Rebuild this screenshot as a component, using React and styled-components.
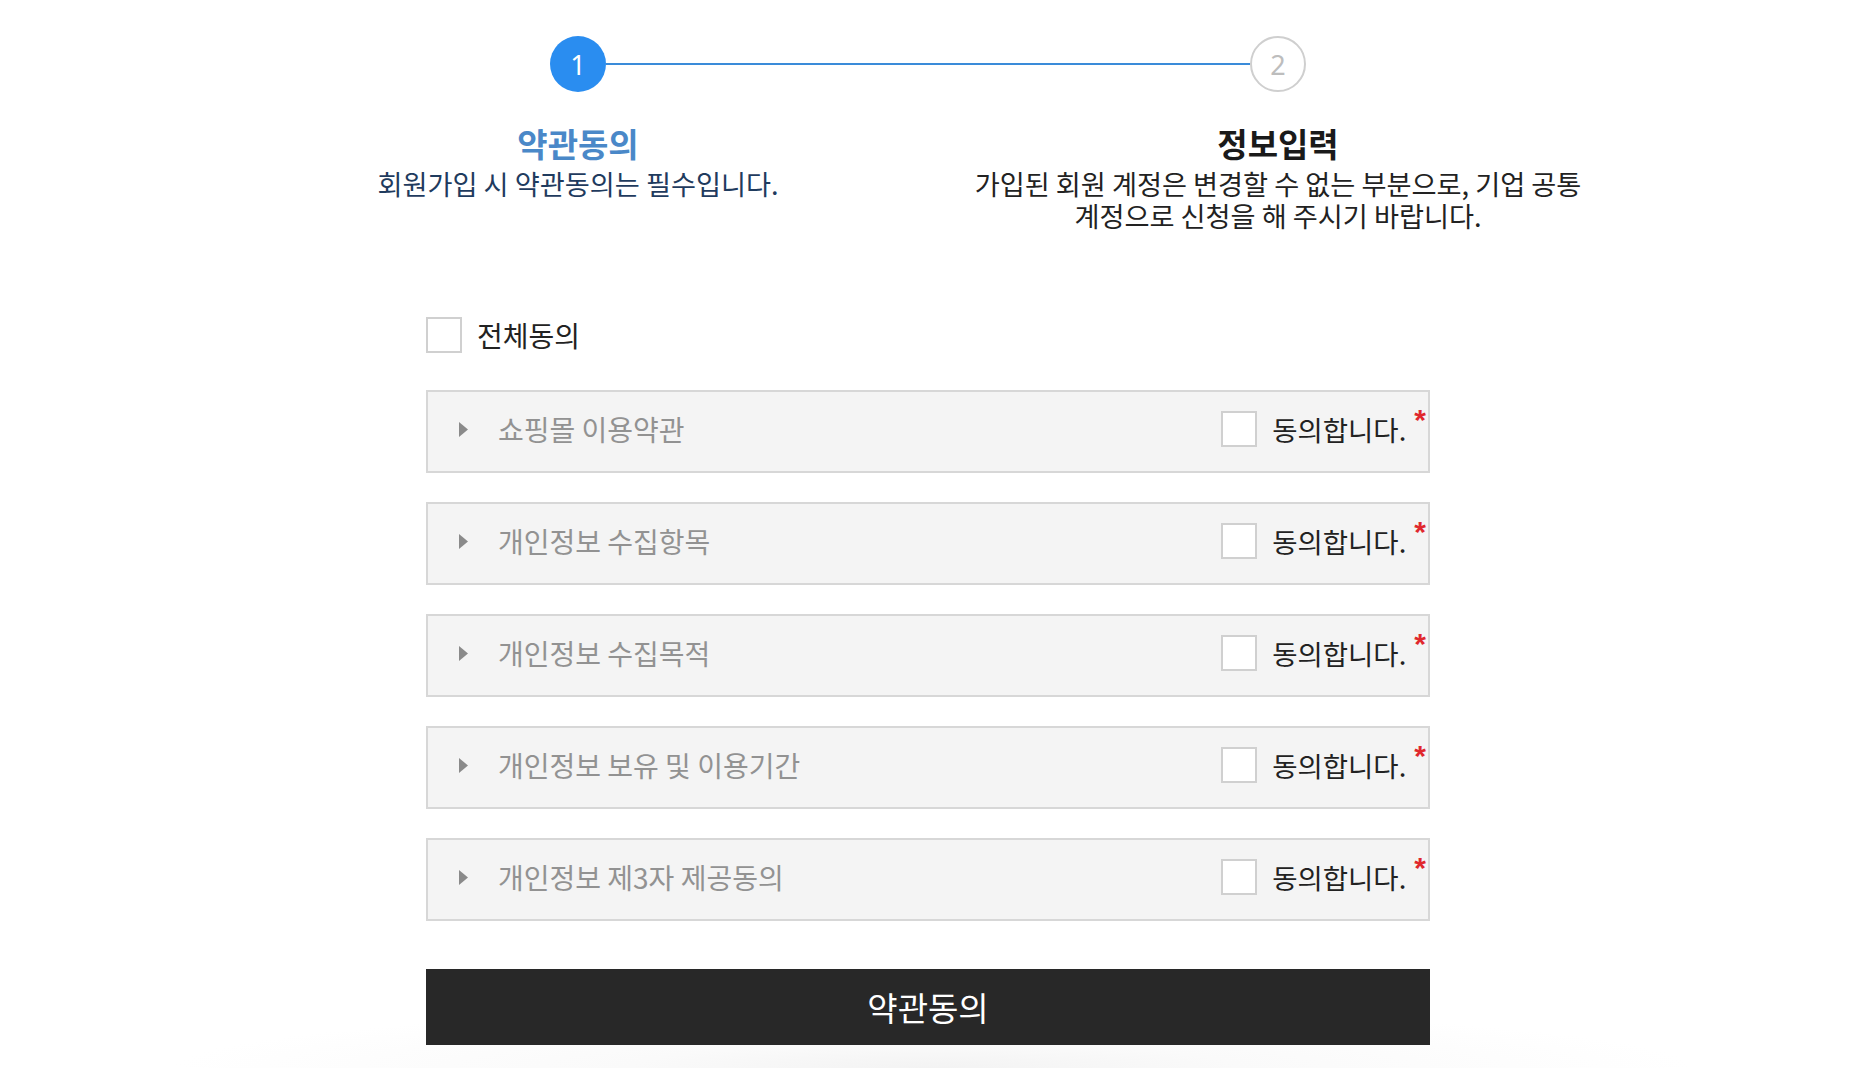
import React from "react";
import styled, { createGlobalStyle } from "styled-components";

const GlobalStyle = createGlobalStyle`
  html, body { margin: 0; padding: 0; background: #fff; }
  body { font-family: "Noto Sans CJK KR", "Noto Sans", sans-serif; color: #222; }
  * { box-sizing: border-box; }
`;

const Page = styled.div`
  min-height: 100vh;
  padding: 36px 12px 0 0;
  background: radial-gradient(ellipse 760px 60px at 50% 100%, #f3f3f3 0%, #fafafa 40%, #ffffff 100%);
`;

const Steps = styled.div`
  width: 1400px;
  margin: 0 auto;
  display: grid;
  grid-template-columns: 1fr 1fr;
`;

const Step = styled.div`
  display: flex;
  flex-direction: column;
  align-items: center;
  text-align: center;
`;

const Track = styled.div`
  width: 100%;
  display: flex;
  align-items: center;
`;

const HalfLine = styled.div`
  flex: 1;
  height: 2px;
  background: ${(p) => (p.$on ? "#3a8bd9" : "transparent")};
`;

const Circle = styled.div`
  width: 56px;
  height: 56px;
  border-radius: 50%;
  display: flex;
  align-items: center;
  justify-content: center;
  font-family: "Noto Sans", sans-serif;
  font-size: 27px;
  line-height: 1;
  background: ${(p) => (p.$active ? "#2a8df0" : "#fff")};
  color: ${(p) => (p.$active ? "#fff" : "#bdbdbd")};
  border: ${(p) => (p.$active ? "none" : "2px solid #cfcfcf")};
`;

const StepTitle = styled.div`
  margin-top: 32px;
  font-size: 33px;
  line-height: 38px;
  font-weight: 700;
  color: ${(p) => (p.$active ? "#4a88c8" : "#1a1a1a")};
`;

const StepDesc = styled.div`
  max-width: 620px;
  margin-top: 5px;
  font-size: 27.2px;
  line-height: 32px;
  color: ${(p) => (p.$active ? "#1f3b5e" : "#222")};
`;

const Content = styled.div`
  width: 1004px;
  margin: 86px auto 0;
  display: flex;
  flex-direction: column;
`;

const AllAgree = styled.label`
  display: flex;
  align-items: center;
  gap: 15px;
  height: 36px;
  font-size: 28px;
  color: #222;
`;

const Box = styled.span`
  width: 36px;
  height: 36px;
  flex: none;
  background: #fff;
  border: 2px solid #d0d0d0;
`;

const TermList = styled.div`
  margin-top: 37px;
  display: flex;
  flex-direction: column;
  gap: 29px;
`;

const TermRow = styled.div`
  height: 83px;
  display: flex;
  align-items: center;
  padding: 0 2px 5px 31px;
  background: #f4f4f4;
  border: 2px solid #d7d7d7;
`;

const Arrow = styled.svg`
  width: 9px;
  height: 15px;
  flex: none;
`;

const TermLabel = styled.span`
  margin-left: 30px;
  flex: 1;
  font-size: 28px;
  color: #929292;
`;

const Agree = styled.label`
  display: flex;
  align-items: center;
  gap: 15px;
  font-size: 27.5px;
  color: #222;
`;

const AgreeText = styled.span`
  display: flex;
  align-items: flex-start;
  gap: 8px;
  line-height: 36px;
`;

const Req = styled.span`
  color: #e0282d;
  font-family: "Liberation Sans", sans-serif;
  font-size: 30px;
  font-weight: 700;
  line-height: 1;
  margin-top: -6px;
`;

const SubmitButton = styled.button`
  margin-top: 48px;
  height: 76px;
  width: 100%;
  border: none;
  background: #282828;
  color: #fff;
  font-family: "Noto Sans CJK KR", sans-serif;
  font-size: 33px;
  font-weight: 400;
  cursor: pointer;
`;

const terms = [
  "쇼핑몰 이용약관",
  "개인정보 수집항목",
  "개인정보 수집목적",
  "개인정보 보유 및 이용기간",
  "개인정보 제3자 제공동의",
];

export default function App() {
  return (
    <>
      <GlobalStyle />
      <Page>
        <Steps>
          <Step>
            <Track>
              <HalfLine />
              <Circle $active>1</Circle>
              <HalfLine $on />
            </Track>
            <StepTitle $active>약관동의</StepTitle>
            <StepDesc $active>회원가입 시 약관동의는 필수입니다.</StepDesc>
          </Step>
          <Step>
            <Track>
              <HalfLine $on />
              <Circle>2</Circle>
              <HalfLine />
            </Track>
            <StepTitle>정보입력</StepTitle>
            <StepDesc>
              가입된 회원 계정은 변경할 수 없는 부분으로, 기업 공통 계정으로 신청을 해 주시기 바랍니다.
            </StepDesc>
          </Step>
        </Steps>
        <Content>
          <AllAgree>
            <Box />
            전체동의
          </AllAgree>
          <TermList>
            {terms.map((t) => (
              <TermRow key={t}>
                <Arrow viewBox="0 0 9 15">
                  <polygon points="0,0 9,7.5 0,15" fill="#8a8a8a" />
                </Arrow>
                <TermLabel>{t}</TermLabel>
                <Agree>
                  <Box />
                  <AgreeText>
                    동의합니다.
                    <Req>*</Req>
                  </AgreeText>
                </Agree>
              </TermRow>
            ))}
          </TermList>
          <SubmitButton>약관동의</SubmitButton>
        </Content>
      </Page>
    </>
  );
}
